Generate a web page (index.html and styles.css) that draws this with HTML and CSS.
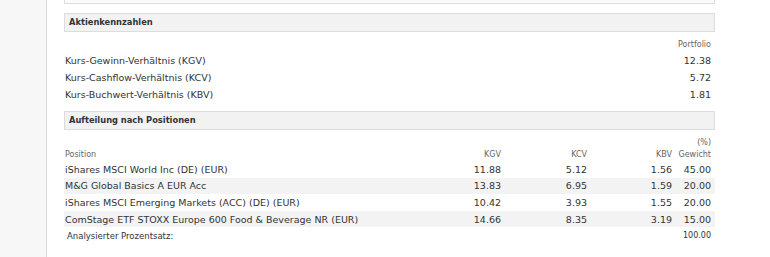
FILE: index.html
```html
<!DOCTYPE html>
<html>
<head>
<meta charset="utf-8">
<link rel="stylesheet" href="styles.css">
</head>
<body>
<div class="page">
  <div class="sidebar"></div>
  <div class="main">
    <div class="prev-box"></div>
    <div class="section-head">Aktienkennzahlen</div>
    <table class="kz">
      <tr class="caption-row"><td></td><td class="num small">Portfolio</td></tr>
      <tr><td>Kurs-Gewinn-Verhältnis (KGV)</td><td class="num">12.38</td></tr>
      <tr><td>Kurs-Cashflow-Verhältnis (KCV)</td><td class="num">5.72</td></tr>
      <tr><td>Kurs-Buchwert-Verhältnis (KBV)</td><td class="num">1.81</td></tr>
    </table>
    <div class="section-head">Aufteilung nach Positionen</div>
    <table class="pos">
      <colgroup>
        <col>
        <col class="c-kgv">
        <col class="c-kcv">
        <col class="c-kbv">
        <col class="c-gew">
      </colgroup>
      <tr class="unit-row"><td></td><td></td><td></td><td></td><td class="num small">(%)</td></tr>
      <tr class="head-row"><td class="small">Position</td><td class="num small">KGV</td><td class="num small">KCV</td><td class="num small">KBV</td><td class="num small">Gewicht</td></tr>
      <tr><td>iShares MSCI World Inc (DE) (EUR)</td><td class="num">11.88</td><td class="num">5.12</td><td class="num">1.56</td><td class="num">45.00</td></tr>
      <tr class="alt"><td>M&amp;G Global Basics A EUR Acc</td><td class="num">13.83</td><td class="num">6.95</td><td class="num">1.59</td><td class="num">20.00</td></tr>
      <tr><td>iShares MSCI Emerging Markets (ACC) (DE) (EUR)</td><td class="num">10.42</td><td class="num">3.93</td><td class="num">1.55</td><td class="num">20.00</td></tr>
      <tr class="alt"><td>ComStage ETF STOXX Europe 600 Food &amp; Beverage NR (EUR)</td><td class="num">14.66</td><td class="num">8.35</td><td class="num">3.19</td><td class="num">15.00</td></tr>
      <tr class="total-row"><td class="small total-label">Analysierter Prozentsatz:</td><td></td><td></td><td></td><td class="num small">100.00</td></tr>
    </table>
  </div>
</div>
</body>
</html>
```

FILE: styles.css
```css
html, body {
  margin: 0;
  padding: 0;
  background: #ffffff;
}
body {
  font-family: "DejaVu Sans", Verdana, sans-serif;
  color: #333333;
  font-size: 9.5px;
}
.page {
  display: flex;
  height: 257px;
  overflow: hidden;
}
.sidebar {
  width: 46px;
  flex: none;
  background: #f7f7f7;
  border-right: 1px solid #dddddd;
}
.main {
  width: 651px;
  margin-left: 17px;
  display: flex;
  flex-direction: column;
}
.prev-box {
  height: 3px;
  background: #fbfbfb;
  border: 1px solid #dddddd;
  border-top: none;
  margin-bottom: 9px;
}
.section-head {
  height: 17px;
  line-height: 17px;
  background: #f2f2f2;
  border: 1px solid #dcdcdc;
  padding-left: 4px;
  font-weight: bold;
  font-size: 8.3px;
  color: #333333;
}
table {
  border-collapse: collapse;
  width: 651px;
}
td {
  padding: 0 0 0 1px;
  white-space: nowrap;
}
.num {
  text-align: right;
  padding-right: 4px;
}
.small {
  font-size: 8px;
  color: #666666;
}
.kz {
  margin-top: 4px;
  margin-bottom: 8px;
}
.kz tr {
  height: 17px;
}
.kz .caption-row {
  height: 16px;
}
.pos {
  margin-top: 7px;
}
.pos tr {
  height: 16.6px;
}
.pos .unit-row {
  height: 11px;
}
.pos .head-row {
  height: 13px;
}
.pos .alt td {
  background: #f3f3f3;
}
.c-kgv { width: 60px; }
.c-kcv { width: 86px; }
.c-kbv { width: 85px; }
.c-gew { width: 39px; }
.total-label {
  padding-left: 3px;
  font-size: 8.5px;
  color: #333333;
}
.total-row td.num {
  color: #333333;
}
```
